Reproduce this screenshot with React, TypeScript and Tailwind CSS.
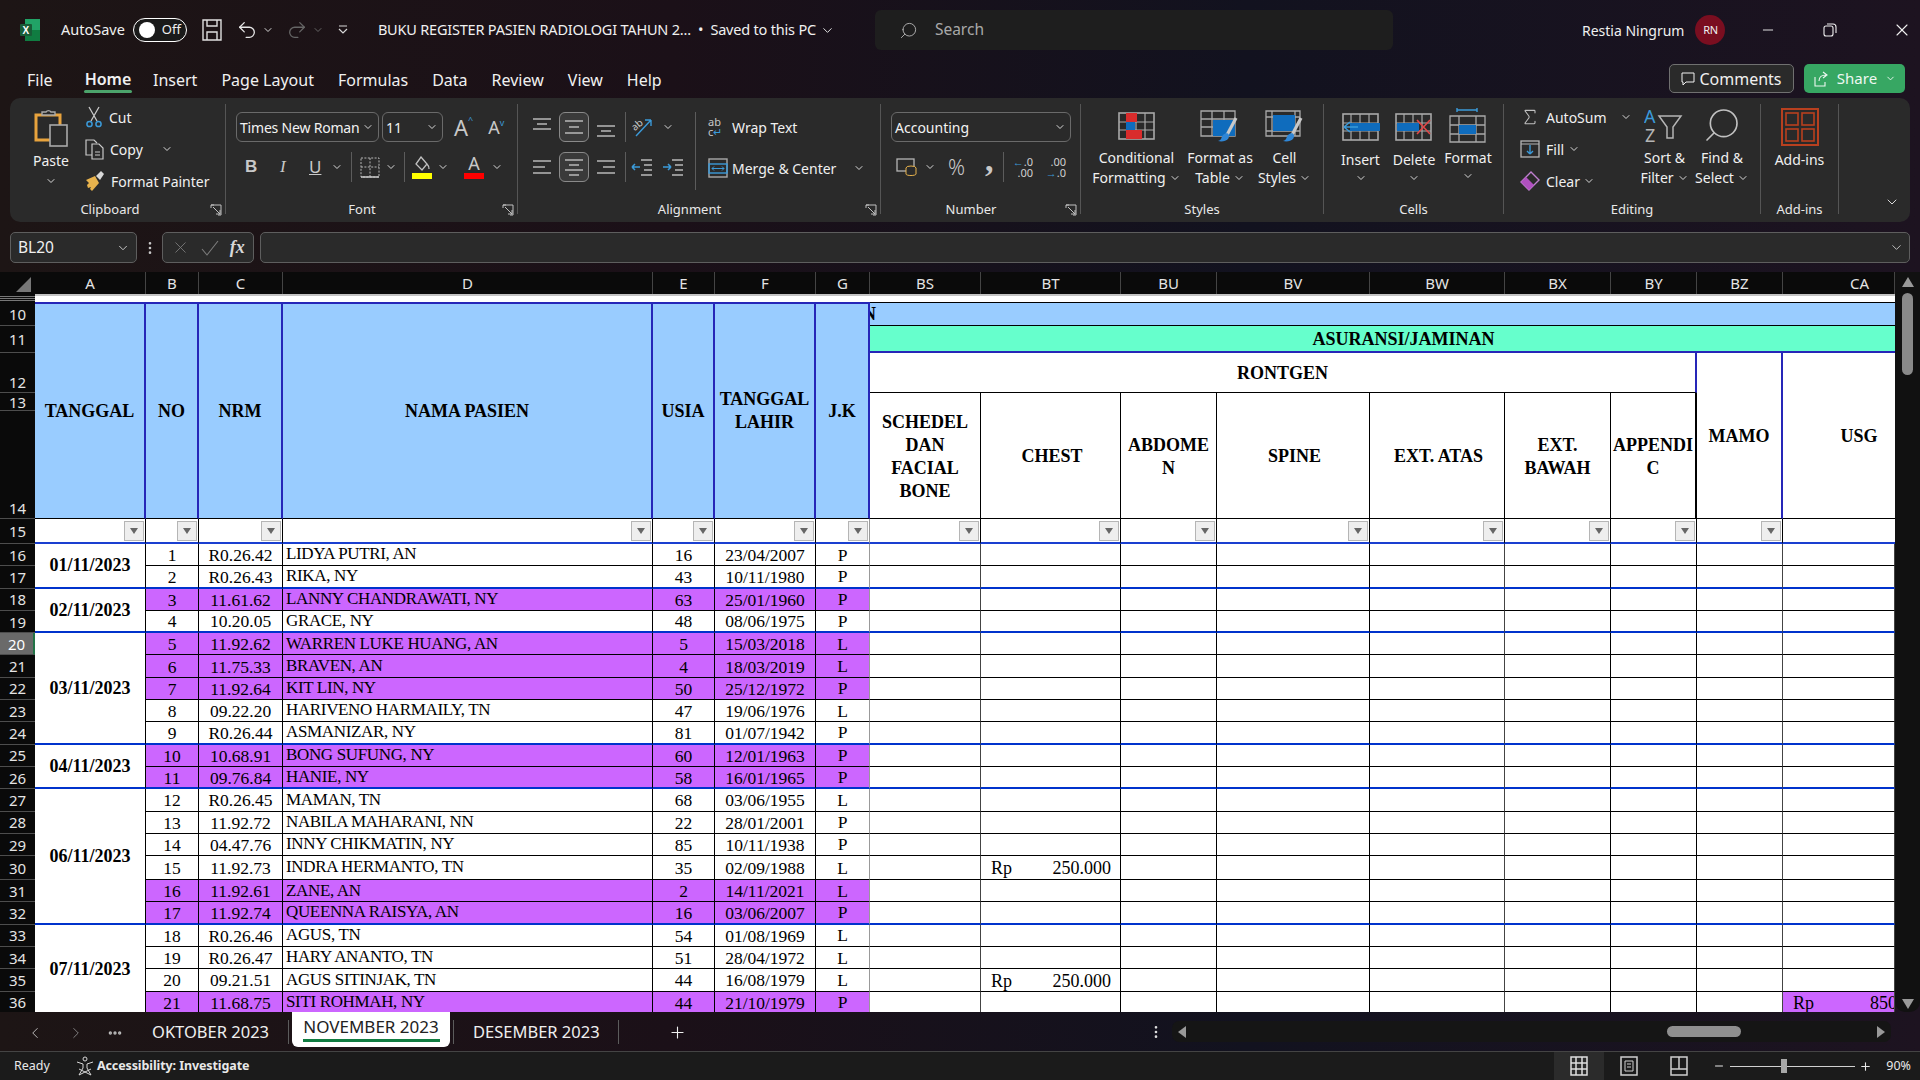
import type { ReactNode } from 'react';
import { ChevronDown, ChevronLeft, ChevronRight, Minus, MoreHorizontal, MoreVertical, Plus, Redo2, Search, Sigma, Undo2, X } from 'lucide-react';

type Row = { no: number; nrm: string; name: string; age: number; dob: string; jk: string; purple?: boolean };

const rows: Row[] = [
  { no: 1, nrm: 'R0.26.42', name: 'LIDYA PUTRI, AN', age: 16, dob: '23/04/2007', jk: 'P' },
  { no: 2, nrm: 'R0.26.43', name: 'RIKA, NY', age: 43, dob: '10/11/1980', jk: 'P' },
  { no: 3, nrm: '11.61.62', name: 'LANNY CHANDRAWATI, NY', age: 63, dob: '25/01/1960', jk: 'P', purple: true },
  { no: 4, nrm: '10.20.05', name: 'GRACE, NY', age: 48, dob: '08/06/1975', jk: 'P' },
  { no: 5, nrm: '11.92.62', name: 'WARREN LUKE HUANG, AN', age: 5, dob: '15/03/2018', jk: 'L', purple: true },
  { no: 6, nrm: '11.75.33', name: 'BRAVEN, AN', age: 4, dob: '18/03/2019', jk: 'L', purple: true },
  { no: 7, nrm: '11.92.64', name: 'KIT LIN, NY', age: 50, dob: '25/12/1972', jk: 'P', purple: true },
  { no: 8, nrm: '09.22.20', name: 'HARIVENO HARMAILY, TN', age: 47, dob: '19/06/1976', jk: 'L' },
  { no: 9, nrm: 'R0.26.44', name: 'ASMANIZAR, NY', age: 81, dob: '01/07/1942', jk: 'P' },
  { no: 10, nrm: '10.68.91', name: 'BONG SUFUNG, NY', age: 60, dob: '12/01/1963', jk: 'P', purple: true },
  { no: 11, nrm: '09.76.84', name: 'HANIE, NY', age: 58, dob: '16/01/1965', jk: 'P', purple: true },
  { no: 12, nrm: 'R0.26.45', name: 'MAMAN, TN', age: 68, dob: '03/06/1955', jk: 'L' },
  { no: 13, nrm: '11.92.72', name: 'NABILA MAHARANI, NN', age: 22, dob: '28/01/2001', jk: 'P' },
  { no: 14, nrm: '04.47.76', name: 'INNY CHIKMATIN, NY', age: 85, dob: '10/11/1938', jk: 'P' },
  { no: 15, nrm: '11.92.73', name: 'INDRA HERMANTO, TN', age: 35, dob: '02/09/1988', jk: 'L' },
  { no: 16, nrm: '11.92.61', name: 'ZANE, AN', age: 2, dob: '14/11/2021', jk: 'L', purple: true },
  { no: 17, nrm: '11.92.74', name: 'QUEENNA RAISYA, AN', age: 16, dob: '03/06/2007', jk: 'P', purple: true },
  { no: 18, nrm: 'R0.26.46', name: 'AGUS, TN', age: 54, dob: '01/08/1969', jk: 'L' },
  { no: 19, nrm: 'R0.26.47', name: 'HARY ANANTO, TN', age: 51, dob: '28/04/1972', jk: 'L' },
  { no: 20, nrm: '09.21.51', name: 'AGUS SITINJAK, TN', age: 44, dob: '16/08/1979', jk: 'L' },
  { no: 21, nrm: '11.68.75', name: 'SITI ROHMAH, NY', age: 44, dob: '21/10/1979', jk: 'P', purple: true },
];

// first row number of each merged date, and how many rows it covers
const dates: Record<number, { label: string; span: string; last: boolean }> = {
  1: { label: '01/11/2023', span: 'row-span-2', last: true },
  3: { label: '02/11/2023', span: 'row-span-2', last: true },
  5: { label: '03/11/2023', span: 'row-span-5', last: true },
  10: { label: '04/11/2023', span: 'row-span-2', last: true },
  12: { label: '06/11/2023', span: 'row-span-6', last: true },
  18: { label: '07/11/2023', span: 'row-span-4', last: false },
};
const groupEnds = [2, 4, 9, 11, 17];
const rightCols = ['border-[#444]', 'border-black', 'border-black', 'border-black', 'border-[#444]', 'border-black', 'border-black', 'border-[#444]', 'border-[#444]'];
const colNames = ['A', 'B', 'C', 'D', 'E', 'F', 'G', 'BS', 'BT', 'BU', 'BV', 'BW', 'BX', 'BY', 'BZ', 'CA'];

const Chev = ({ className = '' }: { className?: string }) => <ChevronDown size={12} strokeWidth={2} className={`shrink-0 text-[#d8d8d8] ${className}`} />;

function RowHead({ label, align = 'items-center', active }: { label: number | string; align?: string; active?: boolean }) {
  return (
    <div className={`flex justify-center font-['Noto_Sans',sans-serif] text-[15px] leading-[20px] tracking-normal border-b border-[#4d4d4d] overflow-hidden ${align} ${active ? 'bg-[#6a6a6a] text-white border-r-2 border-r-[#217346]' : 'bg-[#0a0a0a] text-[#e4e4e4]'}`}>
      {label}
    </div>
  );
}

function FilterCell({ border }: { border: string }) {
  return (
    <div className={`flex items-center justify-end bg-white border-b-2 border-b-[#1a3fd0] pr-[1px] ${border}`}>
      <div className="flex h-[20px] w-[20px] items-center justify-center border border-[#b5b5b5] bg-[#eeeeee]">
        <div className="h-0 w-0 border-x-[4px] border-t-[6px] border-x-transparent border-t-[#666]" />
      </div>
    </div>
  );
}

function Rp({ amount }: { amount: string }) {
  return (
    <div className="flex h-full items-center justify-between pl-[10px] pr-[9px] pt-[2px] text-[18px] text-black">
      <span>Rp</span>
      <span>{amount}</span>
    </div>
  );
}

function DataRow({ r, index }: { r: Row; index: number }) {
  const rowNo = index + 16;
  const end = groupEnds.includes(r.no);
  const line = end ? 'border-b-2 border-b-[#0033cc]' : 'border-b border-b-black';
  const fill = r.purple ? 'bg-[#cc66ff]' : 'bg-white';
  const center = `flex items-center justify-center border-r border-r-black pt-[1px] text-[17.5px] text-black overflow-hidden ${line} ${fill}`;
  const date = dates[r.no];
  return (
    <>
      <RowHead label={rowNo} active={rowNo === 20} />
      {date && (
        <div className={`flex items-center justify-center bg-white border-r border-r-black pt-[1px] font-bold text-black ${date.span} ${date.last ? 'border-b-2 border-b-[#0033cc]' : ''}`}>
          {date.label}
        </div>
      )}
      <div className={center}>{r.no}</div>
      <div className={center}>{r.nrm}</div>
      <div className={`flex items-center border-r border-r-black pb-[1px] pl-[3px] text-[17px] tracking-[-0.35px] whitespace-nowrap text-black overflow-hidden ${line} ${fill}`}>{r.name}</div>
      <div className={center}>{r.age}</div>
      <div className={center}>{r.dob}</div>
      <div className={`flex items-center justify-center border-r border-r-[#999] text-[17.5px] text-black ${line} ${fill}`}>{r.jk}</div>
      {rightCols.map((c, i) => (
        <div key={i} className={`border-r overflow-hidden ${c} ${line} ${i === 8 && r.purple && r.no === 21 ? 'bg-[#cc66ff]' : 'bg-white'}`}>
          {i === 1 && (r.no === 15 || r.no === 20) ? <Rp amount="250.000" /> : null}
          {i === 8 && r.no === 21 ? (
            <div className="flex h-full items-center whitespace-nowrap pl-[10px] pt-[2px] text-[18px] text-black">
              <span>Rp</span>
              <span className="ml-[56px] shrink-0">850.000</span>
            </div>
          ) : null}
        </div>
      ))}
    </>
  );
}

const leftHead = 'flex items-center justify-center bg-[#99ccff] border-t-2 border-t-[#2626b8] border-r-2 border-r-[#2626b8] border-b border-b-black text-center font-bold leading-[23px] text-black row-span-5';
const rightHead = 'flex items-center justify-center bg-white border-r border-r-black border-b border-b-black pt-[2px] text-center font-bold leading-[23px] text-black overflow-hidden whitespace-nowrap row-span-2';

function Sheet() {
  return (
    <div className="grid h-[740px] w-[1895px] shrink-0 grid-cols-[35px_111px_53px_84px_370px_62px_101px_54px_111px_140px_96px_153px_135px_106px_86px_86px_112px] grid-rows-[22px_8px_24px_27px_40px_18px_108px_25px_repeat(14,22.3px)_24px_repeat(6,22.3px)] overflow-hidden bg-white font-['Liberation_Serif',serif] text-[18px]">
      <div className="flex items-end justify-end bg-[#0a0a0a] p-[2px] pr-[4px]">
        <div className="h-0 w-0 border-b-[15px] border-l-[15px] border-b-[#777] border-l-transparent" />
      </div>
      {colNames.map((c) => (
        <div key={c} className={`flex items-center justify-center border-r border-[#444] bg-[#0a0a0a] font-['Noto_Sans',sans-serif] text-[15px] text-[#e4e4e4] ${c === 'CA' ? 'pl-[42px]' : ''}`}>{c}</div>
      ))}

      <div className="flex flex-col justify-end gap-[1px] bg-[#0a0a0a] pb-[1px]">
        <div className="h-px bg-[#777]" />
        <div className="h-px bg-[#777]" />
        <div className="h-px bg-[#777]" />
      </div>
      <div className="col-span-16 border-t-2 border-[#c4c4c4] bg-white" />

      <RowHead label={10} />
      <div className={leftHead}>TANGGAL</div>
      <div className={leftHead}>NO</div>
      <div className={leftHead}>NRM</div>
      <div className={leftHead}>NAMA PASIEN</div>
      <div className={leftHead}>USIA</div>
      <div className={leftHead}>TANGGAL<br />LAHIR</div>
      <div className={`${leftHead} border-r-[#9a9ab8]`}>J.K</div>
      <div className="col-span-9 overflow-hidden border-y border-black bg-[#99ccff] font-bold leading-[22px] text-black"><span className="-ml-[7px] block">N</span></div>

      <RowHead label={11} />
      <div className="col-span-9 flex items-center justify-center border-b-2 border-[#2626b8] bg-[#66ffcc] pl-[42px] pt-[1px] font-bold text-black">ASURANSI/JAMINAN</div>

      <RowHead label={12} align="items-end" />
      <div className="col-span-7 flex items-center justify-center border-b border-r-2 border-black border-r-[#2626b8] bg-white pt-[1px] font-bold text-black">RONTGEN</div>
      <div className="row-span-3 flex items-center justify-center border-b border-r-2 border-black border-r-[#2626b8] bg-white pt-[2px] font-bold text-black">MAMO</div>
      <div className="row-span-3 flex items-center justify-center border-b border-black bg-white pl-[40px] pt-[2px] font-bold text-black">USG</div>

      <RowHead label={13} />
      <div className={rightHead}>SCHEDEL<br />DAN<br />FACIAL<br />BONE</div>
      <div className={rightHead}><span className="pl-[3px]">CHEST</span></div>
      <div className={rightHead}>ABDOME<br />N</div>
      <div className={rightHead}><span className="pl-[3px]">SPINE</span></div>
      <div className={rightHead}><span className="pl-[3px]">EXT. ATAS</span></div>
      <div className={rightHead}>EXT.<br />BAWAH</div>
      <div className={`${rightHead} border-r-2 border-r-[#2626b8]`}>APPENDI<br />C</div>

      <RowHead label={14} align="items-end" />

      <RowHead label={15} />
      {[0, 1, 2, 3, 4, 5].map((i) => <FilterCell key={i} border="border-r border-r-black" />)}
      <FilterCell border="border-r border-r-[#999]" />
      {[0, 1, 2, 3, 4, 5, 6, 7].map((i) => <FilterCell key={i} border="border-r border-r-black" />)}
      <div className="border-b-2 border-b-[#1a3fd0] bg-white" />

      {rows.map((r, i) => <DataRow key={r.no} r={r} index={i} />)}
    </div>
  );
}

/* ---------- ribbon icons ---------- */

const G = '#a9a9a9';
const B = '#0f6cbd';

function Lines({ rows: ls, size = 24 }: { rows: [number, number, number][]; size?: number }) {
  return (
    <svg width={size} height={size} viewBox="0 0 24 24" className="shrink-0">
      {ls.map(([a, b, y], i) => <line key={i} x1={a} x2={b} y1={y} y2={y} stroke="#b9b9b9" strokeWidth="1.6" />)}
    </svg>
  );
}

function TableBase({ children, cols = 3 }: { children?: ReactNode; cols?: number }) {
  const xs = cols === 3 ? [12, 24] : [9, 18, 27];
  return (
    <svg width="38" height="30" viewBox="0 0 38 30" className="shrink-0">
      <rect x="1" y="2" width="35" height="26" fill="none" stroke={G} strokeWidth="1.6" />
      {xs.map((x) => <line key={x} x1={x} x2={x} y1="2" y2="28" stroke={G} strokeWidth="1.2" />)}
      <line x1="1" x2="36" y1="11" y2="11" stroke={G} strokeWidth="1.2" />
      <line x1="1" x2="36" y1="19" y2="19" stroke={G} strokeWidth="1.2" />
      {children}
    </svg>
  );
}

const Brush = () => (
  <>
    <path d="M36 9 L27 26" stroke="#c8c8c8" strokeWidth="3.2" />
    <path d="M23 26 C27 22 31 25 28 30 C26 32 22 33 18 32 C22 31 21 28 23 26Z" fill="#2f86d6" />
  </>
);

function ToolBtn({ children, active }: { children: ReactNode; active?: boolean }) {
  return (
    <div className={`flex h-[30px] w-[30px] items-center justify-center rounded-[6px] ${active ? 'border border-[#8a8a8a] bg-[#3a3a3a]' : ''}`}>
      {children}
    </div>
  );
}

const VSep = ({ h = 'h-[30px]', className = '' }: { h?: string; className?: string }) => <div className={`w-px bg-[#5c5c5c] ${h} ${className}`} />;

function Group({ width, label, launcher, children, labelClass = '' }: { width: string; label: string; launcher?: boolean; children: ReactNode; labelClass?: string }) {
  return (
    <div className="flex">
      <div className={`flex h-[120px] flex-col ${width}`}>
        <div className="min-h-0 flex-1">{children}</div>
        <div className={`flex h-[20px] items-center justify-center pb-[2px] text-[13px] text-[#e8e8e8] ${labelClass}`}>
          <span className="flex-1 text-center">{label}</span>
          {launcher && (
            <svg width="12" height="12" viewBox="0 0 12 12" className="ml-[4px] mr-[3px] shrink-0">
              <path d="M1 1h10v10M1 1v3M1 1h3M11 11H8M3 3l7 7M10 6v4H6" fill="none" stroke="#c0c0c0" strokeWidth="1" />
            </svg>
          )}
        </div>
      </div>
      <div className="mt-[3px] h-[110px] w-px bg-[#555]" />
    </div>
  );
}

function BigBtn({ icon, lines, width, iconH = 'h-[44px]', chevOwnLine, noChev }: { icon: ReactNode; lines: string[]; width: string; iconH?: string; chevOwnLine?: boolean; noChev?: boolean }) {
  return (
    <div className={`flex flex-col items-center ${width}`}>
      <div className={`flex items-center justify-center ${iconH}`}>{icon}</div>
      <div className="text-center text-[14px] leading-[20px] whitespace-nowrap text-[#f0f0f0]">
        {lines.map((l, i) => <div key={i} className="flex items-center justify-center gap-[3px]">{l}{!chevOwnLine && !noChev && i === lines.length - 1 && <Chev />}</div>)}
        {chevOwnLine && <div className="flex justify-center pt-[2px]"><Chev /></div>}
      </div>
    </div>
  );
}

function Ribbon() {
  const small = 'flex h-[32px] items-center gap-[6px] text-[14px] text-[#f0f0f0] whitespace-nowrap';
  const combo = 'flex h-[30px] items-center justify-between rounded-[6px] border border-[#6a6a6a] pl-[3px] pr-[4px] text-[14px] text-[#f2f2f2]';
  return (
    <div className="mx-[10px] flex h-[124px] overflow-hidden rounded-[10px] bg-[#2a2a2a] pt-[3px]">
      {/* Clipboard */}
      <Group width="w-[215px]" label="Clipboard" launcher labelClass="pl-[4px]">
        <div className="flex">
          <div className="flex w-[75px] flex-col items-center pl-[7px] pt-[8px]">
            <svg width="36" height="38" viewBox="0 0 36 38">
              <path d="M3 6h24v25H3z" fill="none" stroke="#e8a33d" strokeWidth="3" />
              <path d="M9 6V3h4a3 3 0 0 1 5 0h4v3z" fill="#2a2a2a" stroke="#a9a9a9" strokeWidth="1.4" />
              <rect x="17" y="16" width="17" height="21" fill="#2a2a2a" stroke="#a9a9a9" strokeWidth="1.6" />
            </svg>
            <span className="mt-[4px] text-[14px] leading-[20px] text-[#f0f0f0]">Paste</span>
            <Chev className="mt-[4px]" />
          </div>
          <div className="flex flex-col">
            <div className={small}>
              <svg width="18" height="22" viewBox="0 0 18 22" className="shrink-0"><path d="M4 1l8 14M14 1L6 15" stroke="#c8c8c8" strokeWidth="1.3" fill="none" /><circle cx="4.5" cy="18" r="2.6" stroke="#3b9ad9" strokeWidth="1.5" fill="none" /><circle cx="13.5" cy="18" r="2.6" stroke="#3b9ad9" strokeWidth="1.5" fill="none" /></svg>
              Cut
            </div>
            <div className={small}>
              <svg width="20" height="22" viewBox="0 0 20 22" className="shrink-0"><path d="M7 17H1V2h8l3 3" fill="none" stroke="#c8c8c8" strokeWidth="1.2" /><path d="M7 6h7l4 4v11H7z" fill="#2a2a2a" stroke="#c8c8c8" strokeWidth="1.2" /><path d="M10 14h5M10 17h5" stroke="#c8c8c8" /></svg>
              <span className="ml-[-1px]">Copy</span>
              <Chev className="ml-[12px]" />
            </div>
            <div className={`${small} gap-[2px]`}>
              <svg width="20" height="22" viewBox="0 0 20 22" className="shrink-0"><path d="M1 10l9-4 4 7-7 8-2-2 1-2-3 1-1-3 2-2z" fill="#e8b34d" /><path d="M11 6l5-5 3 3-4 6z" fill="#d8d8d8" /></svg>
              Format Painter
            </div>
          </div>
        </div>
      </Group>

      {/* Font */}
      <Group width="w-[291px]" label="Font" launcher>
        <div className="flex flex-col gap-[10px] pl-[10px] pt-[11px]">
          <div className="flex items-center gap-[3px]">
            <div className={`${combo} w-[143px] tracking-[-0.2px]`}>Times New Roman<Chev /></div>
            <div className={`${combo} w-[61px]`}>11<Chev /></div>
            <div className="ml-[8px] flex items-start text-[22px] leading-none text-[#c8c8c8]">A<span className="-mt-[1px] text-[9px] text-[#3b9ad9]">^</span></div>
            <div className="ml-[12px] flex items-start text-[18px] leading-none text-[#c8c8c8]">A<span className="text-[9px] text-[#3b9ad9]">v</span></div>
          </div>
          <div className="flex h-[30px] items-center pl-[9px] text-[17px] text-[#c8c8c8]">
            <span className="w-[35px] font-['Liberation_Sans',sans-serif] font-bold">B</span>
            <span className="w-[29px] font-['Liberation_Serif',serif] italic">I</span>
            <span className="w-[22px] underline">U</span>
            <Chev />
            <VSep className="mx-[8px]" />
            <svg width="20" height="24" viewBox="0 0 20 24" className="shrink-0"><path d="M1 3h18v19H1zM10 3v19M1 12h18" fill="none" stroke="#b5b5b5" strokeDasharray="2 1.4" /><path d="M1 22h18" stroke="#c8c8c8" strokeWidth="1.5" /></svg>
            <Chev className="ml-[5px]" />
            <VSep className="ml-[7px] mr-[6px]" />
            <div className="flex w-[22px] flex-col items-center">
              <svg width="18" height="16" viewBox="0 0 18 16"><path d="M8 1l6 7-5 6-6-6zM14 8c2 2 2 4 2 5" fill="none" stroke="#c0c0c0" strokeWidth="1.3" /></svg>
              <div className="mt-[1px] h-[6px] w-[20px] bg-[#ffff00]" />
            </div>
            <Chev className="ml-[4px]" />
            <div className="ml-[14px] flex w-[22px] flex-col items-center leading-none">
              <span className="text-[18px] leading-[17px]">A</span>
              <div className="mt-[1px] h-[6px] w-[20px] bg-[#ff0000]" />
            </div>
            <Chev className="ml-[6px]" />
          </div>
        </div>
      </Group>

      {/* Alignment */}
      <Group width="w-[362px]" label="Alignment" launcher>
        <div className="flex pl-[9px] pt-[11px]">
          <div className="flex flex-col gap-[10px]">
            <div className="flex items-center gap-[2px]">
              <ToolBtn><Lines rows={[[3, 21, 4], [7, 17, 9], [3, 21, 14]]} /></ToolBtn>
              <ToolBtn active><Lines rows={[[3, 21, 6], [7, 17, 12], [3, 21, 18]]} /></ToolBtn>
              <ToolBtn><Lines rows={[[3, 21, 11], [7, 17, 16], [3, 21, 21]]} /></ToolBtn>
              <VSep className="mx-[2px]" />
              <svg width="24" height="24" viewBox="0 0 24 24" className="shrink-0"><text x="1" y="14" fontSize="10" fill="#c8c8c8" transform="rotate(-40 6 10)">ab</text><path d="M6 21L21 5M21 5h-6M21 5v6" stroke="#3b9ad9" strokeWidth="1.4" fill="none" /></svg>
              <Chev className="ml-[6px]" />
            </div>
            <div className="flex items-center gap-[2px]">
              <ToolBtn><Lines rows={[[3, 21, 6], [3, 15, 12], [3, 21, 18]]} /></ToolBtn>
              <ToolBtn active><Lines rows={[[3, 21, 5], [7, 17, 10], [3, 21, 15], [7, 17, 20]]} /></ToolBtn>
              <ToolBtn><Lines rows={[[3, 21, 6], [9, 21, 12], [3, 21, 18]]} /></ToolBtn>
              <VSep className="mx-[2px]" />
              <svg width="24" height="24" viewBox="0 0 24 24" className="shrink-0"><path d="M11 5h11M14 10h8M14 15h8M11 20h11" stroke="#b9b9b9" strokeWidth="1.5" /><path d="M10 12H2M2 12l3-3M2 12l3 3" stroke="#3b9ad9" strokeWidth="1.5" fill="none" /></svg>
              <svg width="24" height="24" viewBox="0 0 24 24" className="ml-[5px] shrink-0"><path d="M11 5h11M14 10h8M14 15h8M11 20h11" stroke="#b9b9b9" strokeWidth="1.5" /><path d="M2 12h8M10 12l-3-3M10 12l-3 3" stroke="#3b9ad9" strokeWidth="1.5" fill="none" /></svg>
            </div>
          </div>
          <VSep h="h-[78px]" className="ml-[10px]" />
          <div className="flex flex-col gap-[11px] pl-[12px]">
            <div className="flex h-[30px] items-center text-[14px] whitespace-nowrap text-[#f0f0f0]">
              <div className="w-[24px] text-[11px] leading-[10px] text-[#c8c8c8]">ab<br />c<span className="text-[#3b9ad9]">↵</span></div>
              Wrap Text
            </div>
            <div className="flex h-[30px] items-center text-[14px] whitespace-nowrap text-[#f0f0f0]">
              <svg width="20" height="20" viewBox="0 0 20 20" className="shrink-0"><rect x="1" y="1" width="18" height="18" fill="none" stroke="#a9a9a9" strokeWidth="1.4" /><rect x="1" y="6" width="18" height="9" fill="none" stroke="#3b9ad9" strokeWidth="1.4" /><path d="M4 10.5h12M4 10.5l2-2M4 10.5l2 2M16 10.5l-2-2M16 10.5l-2 2" stroke="#3b9ad9" fill="none" /></svg>
              <span className="ml-[4px]">Merge &amp; Center</span>
              <Chev className="ml-[17px]" />
            </div>
          </div>
        </div>
      </Group>

      {/* Number */}
      <Group width="w-[199px]" label="Number" launcher>
        <div className="flex flex-col gap-[10px] pl-[10px] pt-[11px]">
          <div className={`${combo} w-[180px]`}>Accounting<Chev /></div>
          <div className="flex h-[30px] items-center pl-[5px]">
            <svg width="22" height="20" viewBox="0 0 22 20" className="shrink-0"><rect x="1" y="2" width="17" height="12" fill="none" stroke="#b5b5b5" strokeWidth="1.3" /><ellipse cx="15" cy="11" rx="5" ry="2" fill="#2a2a2a" stroke="#e8b34d" /><path d="M10 11v6c0 2 10 2 10 0v-6" fill="#2a2a2a" stroke="#e8b34d" /></svg>
            <Chev className="ml-[6px]" />
            <span className="ml-[12px] text-[21px] font-light leading-none text-[#c8c8c8]">%</span>
            <span className="ml-[20px] -mt-[14px] w-[9px] font-['Liberation_Serif',serif] text-[34px] font-bold leading-[14px] text-[#c8c8c8]">,</span>
            <VSep className="ml-[9px]" />
            <div className="ml-[3px] w-[26px] text-right text-[11px] leading-[11px] text-[#d0d0d0]"><span className="text-[#3b9ad9]">←</span>.0<br />.00</div>
            <div className="ml-[7px] w-[26px] text-right text-[11px] leading-[11px] text-[#d0d0d0]">.00<br /><span className="text-[#3b9ad9]">→</span>.0</div>
          </div>
        </div>
      </Group>

      {/* Styles */}
      <Group width="w-[242px]" label="Styles">
        <div className="flex pl-[6px] pt-[3px]">
          <BigBtn width="w-[99px]" lines={['Conditional', 'Formatting']} icon={
            <TableBase cols={4}>
              <rect x="8" y="2" width="11" height="9" fill="#d92c2c" /><rect x="8" y="11" width="9" height="8" fill={B} /><rect x="8" y="19" width="16" height="9" fill="#d92c2c" />
            </TableBase>
          } />
          <BigBtn width="w-[68px]" lines={['Format as', 'Table']} icon={
            <svg width="40" height="34" viewBox="0 0 40 34" className="shrink-0">
              <path d="M1 2h34v25H1zM12 2v25M24 2v25M1 10h34M1 18h34" fill="none" stroke={G} strokeWidth="1.3" /><rect x="13" y="11" width="22" height="16" fill={B} /><Brush />
            </svg>
          } />
          <BigBtn width="w-[61px]" lines={['Cell', 'Styles']} icon={
            <svg width="40" height="34" viewBox="0 0 40 34" className="shrink-0">
              <path d="M1 2h34v25H1zM7 2v25M30 2v25M1 8h34M1 22h34" fill="none" stroke={G} strokeWidth="1.3" /><rect x="8" y="6" width="22" height="16" fill={B} /><Brush />
            </svg>
          } />
        </div>
      </Group>

      {/* Cells */}
      <Group width="w-[179px]" label="Cells">
        <div className="flex pl-[10px] pt-[3px]">
          <BigBtn width="w-[53px]" chevOwnLine lines={['Insert']} iconH="h-[46px]" icon={
            <TableBase cols={4}><rect x="8" y="11" width="30" height="8" fill={B} /><path d="M16 15H2M2 15l6-5M2 15l6 5" stroke="#3b9ad9" strokeWidth="1.6" fill="none" /></TableBase>
          } />
          <BigBtn width="w-[54px]" chevOwnLine lines={['Delete']} iconH="h-[46px]" icon={
            <TableBase cols={4}><rect x="2" y="11" width="22" height="8" fill={B} /><path d="M22 8l13 14M35 8L22 22" stroke="#e04848" strokeWidth="1.6" /></TableBase>
          } />
          <BigBtn width="w-[54px]" chevOwnLine lines={['Format']} icon={
            <svg width="38" height="36" viewBox="0 0 38 36" className="shrink-0">
              <path d="M8 2h20M8 0v4M28 0v4" stroke="#3b9ad9" strokeWidth="1.4" />
              <path d="M1 8h35v26H1zM10 8v26M27 8v26M1 17h35M1 26h35" fill="none" stroke={G} strokeWidth="1.3" /><rect x="10" y="17" width="17" height="9" fill={B} />
            </svg>
          } />
        </div>
      </Group>

      {/* Editing */}
      <Group width="w-[256px]" label="Editing">
        <div className="flex">
          <div className="flex w-[132px] flex-col pl-[16px]">
            <div className={small}><Sigma size={20} strokeWidth={1.3} className="text-[#c0c0c0]" />AutoSum<Chev className="ml-[7px]" /></div>
            <div className={small}>
              <svg width="20" height="20" viewBox="0 0 20 20" className="shrink-0"><rect x="1" y="2" width="18" height="16" fill="none" stroke="#b5b5b5" strokeWidth="1.3" /><path d="M1 5h18" stroke="#b5b5b5" /><path d="M10 6v9M10 15l-3-3M10 15l3-3" stroke="#3b9ad9" strokeWidth="1.4" fill="none" /></svg>
              Fill<Chev className="-ml-[2px]" />
            </div>
            <div className={small}>
              <svg width="20" height="20" viewBox="0 0 20 20" className="shrink-0"><path d="M1 11L11 1l8 8-10 10z" fill="none" stroke="#c080d0" strokeWidth="1.4" /><path d="M1 11l5-5 8 8-5 5z" fill="#b050c0" /></svg>
              Clear<Chev className="-ml-[3px]" />
            </div>
          </div>
          <BigBtn width="w-[57px]" lines={['Sort &', 'Filter']} iconH="h-[47px]" icon={
            <svg width="42" height="38" viewBox="0 0 42 38" className="shrink-0">
              <text x="0" y="17" fontSize="18" fill="#3b9ad9" fontFamily="Noto Sans">A</text>
              <text x="1" y="36" fontSize="18" fill="#b5b5b5" fontFamily="Noto Sans">Z</text>
              <path d="M15 10h22l-8 11v11h-6V21z" fill="none" stroke="#b5b5b5" strokeWidth="1.5" />
            </svg>
          } />
          <BigBtn width="w-[58px]" lines={['Find &', 'Select']} iconH="h-[47px]" icon={<Search size={40} strokeWidth={1} className="-scale-x-100 text-[#c0c0c0]" />} />
        </div>
      </Group>

      {/* Add-ins */}
      <Group width="w-[77px]" label="Add-ins">
        <div className="pt-[3px]">
          <BigBtn width="w-[77px]" noChev lines={['Add-ins']} iconH="h-[46px]" icon={
            <svg width="38" height="38" viewBox="0 0 38 38"><rect x="1" y="1" width="36" height="36" fill="none" stroke="#b8401f" strokeWidth="2" /><rect x="5" y="5" width="12" height="12" fill="none" stroke="#b8401f" strokeWidth="1.6" /><rect x="21" y="5" width="12" height="12" fill="none" stroke="#b8401f" strokeWidth="1.6" /><rect x="5" y="21" width="12" height="12" fill="none" stroke="#b8401f" strokeWidth="1.6" /><rect x="21" y="21" width="12" height="12" fill="none" stroke="#b8401f" strokeWidth="1.6" /></svg>
          } />
        </div>
      </Group>

      <div className="flex flex-1 items-end justify-end pb-[12px] pr-[10px]"><ChevronDown size={16} strokeWidth={1.5} className="text-[#d8d8d8]" /></div>
    </div>
  );
}

function TitleBar() {
  return (
    <div className="flex h-[58px] items-center pt-[2px] text-[14px] text-[#f0f0f0]">
      <svg width="22" height="24" viewBox="0 0 22 24" className="ml-[19px] shrink-0">
        <path d="M6 1h15v22H6z" fill="#21a366" /><path d="M6 12h15v11H6z" fill="#107c41" />
        <rect x="1" y="6" width="12" height="12" rx="1" fill="#185c37" />
        <text x="3.5" y="16" fontSize="10" fontWeight="700" fill="#fff" fontFamily="Liberation Sans">X</text>
      </svg>
      <span className="ml-[20px] text-[14.5px]">AutoSave</span>
      <div className="ml-[8px] flex h-[24px] w-[54px] items-center justify-between rounded-full border border-white bg-[#1a1a1a] pl-[5px] pr-[5px]">
        <div className="h-[16px] w-[16px] rounded-full bg-white" />
        <span className="text-[13px]">Off</span>
      </div>
      <svg width="20" height="22" viewBox="0 0 20 22" className="ml-[15px] shrink-0"><path d="M1 1h18v20H1zM5 1v6h10V1M5 21v-8h10v8" fill="none" stroke="#e0e0e0" strokeWidth="1.4" /></svg>
      <Undo2 size={22} strokeWidth={1.4} className="ml-[14px] text-[#e8e8e8]" />
      <Chev className="ml-[4px]" />
      <Redo2 size={22} strokeWidth={1.4} className="ml-[12px] text-[#666]" />
      <ChevronDown size={12} className="ml-[4px] text-[#666]" />
      <svg width="12" height="12" viewBox="0 0 12 12" className="ml-[13px] shrink-0"><path d="M2 2h8M2 5l4 4 4-4" fill="none" stroke="#d8d8d8" strokeWidth="1.2" /></svg>
      <span className="ml-[29px] whitespace-nowrap text-[14.5px] tracking-[-0.2px]">BUKU REGISTER PASIEN RADIOLOGI TAHUN 2... &nbsp;•&nbsp; Saved to this PC</span>
      <ChevronDown size={15} strokeWidth={1.6} className="ml-[4px] text-[#e0e0e0]" />
      <div className="ml-[40px] flex h-[40px] w-[518px] items-center rounded-[6px] bg-[#1e1e1e] pl-[24px]">
        <Search size={19} strokeWidth={1.2} className="-scale-x-100 text-[#b0b0b0]" />
        <span className="ml-[17px] text-[15.5px] text-[#a8a8a8]">Search</span>
      </div>
      <span className="ml-[189px] whitespace-nowrap text-[14px]">Restia Ningrum</span>
      <div className="ml-[11px] flex h-[30px] w-[30px] items-center justify-center rounded-full bg-[#7a0e20] text-[11px] tracking-[-0.3px]">RN</div>
      <Minus size={16} strokeWidth={1.4} className="ml-[35px]" />
      <svg width="14" height="14" viewBox="0 0 14 14" className="ml-[47px] shrink-0"><rect x="1" y="3" width="9" height="10" rx="2" fill="none" stroke="#f0f0f0" strokeWidth="1.1" /><path d="M4 1h6a3 3 0 0 1 3 3v6" fill="none" stroke="#f0f0f0" strokeWidth="1.1" /></svg>
      <X size={20} strokeWidth={1.3} className="ml-[55px]" />
    </div>
  );
}

function MenuBar() {
  const tabs = ['Insert', 'Page Layout', 'Formulas', 'Data', 'Review', 'View', 'Help'];
  return (
    <div className="flex h-[40px] items-start text-[16px] text-[#f0f0f0]">
      <span className="ml-[27px] mt-[10px] w-[57px]">File</span>
      <div className="mt-[10px] flex h-[25px] w-[48px] flex-col items-center justify-between">
        <span className="font-semibold leading-[22px]">Home</span>
        <div className="h-[3px] w-[48px] shrink-0 rounded-full bg-[#4ca36b]" />
      </div>
      <div className="ml-[21px] mt-[10px] flex gap-[24px] whitespace-nowrap">
        {tabs.map((t) => <span key={t}>{t}</span>)}
      </div>
      <div className="ml-auto mr-[15px] mt-[6px] flex gap-[10px]">
        <div className="flex h-[29px] w-[125px] items-center justify-center gap-[4px] rounded-[5px] border border-[#707070] bg-[#2a2a2a] text-[16px]">
          <svg width="14" height="14" viewBox="0 0 14 14"><path d="M1 1h12v9H5l-3 3v-3H1z" fill="none" stroke="#f0f0f0" strokeWidth="1" /></svg>
          Comments
        </div>
        <div className="flex h-[29px] w-[101px] items-center justify-between rounded-[5px] bg-[#37a763] px-[9px] text-[15px] text-[#eef8f2]">
          <svg width="16" height="16" viewBox="0 0 16 16"><path d="M2 6v9h10v-4M6 10c0-4 3-6 7-6M10 1l4 3-4 3" fill="none" stroke="#eef8f2" strokeWidth="1.1" /></svg>
          Share
          <ChevronDown size={11} strokeWidth={2} />
        </div>
      </div>
    </div>
  );
}

function FormulaBar() {
  const box = 'h-[31px] rounded-[5px] border border-[#5e5e5e] bg-[#2a2a2a]';
  return (
    <div className="mx-[10px] mt-[10px] flex items-center text-[#f0f0f0]">
      <div className={`${box} flex w-[127px] items-center justify-between pl-[7px] pr-[6px] text-[15.5px]`}>
        BL20
        <ChevronDown size={14} strokeWidth={1.6} className="text-[#d0d0d0]" />
      </div>
      <MoreVertical size={16} className="ml-[5px] text-[#c8c8c8]" />
      <div className={`${box} ml-[4px] flex w-[92px] items-center justify-around px-[3px] text-[#7d7d7d]`}>
        <X size={19} strokeWidth={1.1} />
        <svg width="18" height="16" viewBox="0 0 18 16"><path d="M1 9l5 6L17 1" fill="none" stroke="#7d7d7d" strokeWidth="1.1" /></svg>
        <span className="font-['Liberation_Serif',serif] text-[18px] font-bold italic text-[#d8d8d8]">fx</span>
      </div>
      <div className={`${box} ml-[6px] flex flex-1 items-center justify-end pr-[5px]`}>
        <ChevronDown size={15} strokeWidth={1.4} className="text-[#d0d0d0]" />
      </div>
    </div>
  );
}

function VScroll() {
  return (
    <div className="flex w-[25px] flex-col items-center rounded-b-[10px] bg-[#111] pt-[5px] pb-[3px]">
      <div className="h-0 w-0 border-x-[6px] border-b-[10px] border-x-transparent border-b-[#999]" />
      <div className="mt-[6px] h-[82px] w-[11px] rounded-full bg-[#8a8a8a]" />
      <div className="mt-auto h-0 w-0 border-x-[6px] border-t-[10px] border-x-transparent border-t-[#999]" />
    </div>
  );
}

function SheetTabs() {
  return (
    <div className="flex h-[40px] border-b border-[#444] text-[16.5px] text-[#efefef]">
      <ChevronLeft size={18} strokeWidth={1.2} className="ml-[26px] mt-[12px] text-[#c8c8c8]" />
      <ChevronRight size={18} strokeWidth={1.2} className="ml-[23px] mt-[12px] text-[#8a8a8a]" />
      <MoreHorizontal size={16} strokeWidth={3} className="ml-[22px] mt-[13px] text-[#bbb]" />
      <span className="ml-[29px] mt-[8px] w-[136px] whitespace-nowrap">OKTOBER 2023</span>
      <VSep h="h-[24px]" className="mt-[8px]" />
      <div className="ml-[3px] flex h-[35px] w-[158px] flex-col items-center rounded-b-[6px] bg-white pt-[4px] text-[17px] text-[#222]">
        <span className="whitespace-nowrap leading-[22px]">NOVEMBER 2023</span>
        <div className="mt-[1px] h-[3px] w-[137px] bg-[#107c41]" />
      </div>
      <VSep h="h-[24px]" className="ml-[3px] mt-[8px]" />
      <span className="ml-[19px] mt-[8px] w-[145px] whitespace-nowrap">DESEMBER 2023</span>
      <VSep h="h-[24px]" className="mt-[8px]" />
      <Plus size={19} strokeWidth={1.4} className="ml-[49px] mt-[11px]" />
      <MoreVertical size={16} className="ml-[461px] mt-[12px] text-[#ddd]" />
      <div className="ml-[8px] mt-[9px] flex h-[21px] w-[719px] items-center rounded-[7px] bg-[#151515] px-[6px]">
        <div className="h-0 w-0 border-y-[6px] border-r-[8px] border-y-transparent border-r-[#999]" />
        <div className="ml-[481px] h-[11px] w-[74px] rounded-full bg-[#8f8f8f]" />
        <div className="ml-auto h-0 w-0 border-y-[6px] border-l-[8px] border-y-transparent border-l-[#999]" />
      </div>
    </div>
  );
}

function StatusBar() {
  return (
    <div className="flex h-[28px] items-center bg-[#1b1b1b] text-[12.5px] text-[#e8e8e8]">
      <span className="ml-[14px]">Ready</span>
      <svg width="18" height="20" viewBox="0 0 18 20" className="ml-[26px] shrink-0"><circle cx="9" cy="3" r="2" fill="none" stroke="#d8d8d8" /><path d="M1 6l6 2v4l-4 7M17 6l-6 2v4l4 7M3 13l12 6M15 13L3 19" fill="none" stroke="#d8d8d8" /></svg>
      <span className="ml-[3px] font-bold tracking-[-0.1px]">Accessibility: Investigate</span>
      <div className="ml-auto flex h-full w-[50px] items-center justify-center bg-[#2b2b2b]">
        <svg width="18" height="20" viewBox="0 0 18 20"><path d="M1 1h16v18H1zM6 1v18M12 1v18M1 7h16M1 13h16" fill="none" stroke="#e0e0e0" strokeWidth="1.5" /></svg>
      </div>
      <svg width="18" height="20" viewBox="0 0 18 20" className="ml-[16px] shrink-0"><path d="M1 1h16v18H1z" fill="none" stroke="#d0d0d0" strokeWidth="1.5" /><path d="M5 5h8v10H5zM7 8h4M7 11h4" fill="none" stroke="#d0d0d0" /></svg>
      <svg width="18" height="20" viewBox="0 0 18 20" className="ml-[32px] shrink-0"><path d="M1 1h16v18H1zM1 13h16M9 1v12" fill="none" stroke="#d0d0d0" strokeWidth="1.5" /></svg>
      <Minus size={12} className="ml-[25px]" />
      <div className="ml-[5px] flex w-[125px] items-center">
        <div className="h-px w-[51px] bg-[#d0d0d0]" />
        <div className="h-[14px] w-[6px] bg-[#a8a8a8]" />
        <div className="h-px flex-1 bg-[#d0d0d0]" />
      </div>
      <Plus size={13} className="ml-[4px]" />
      <span className="ml-[14px] mr-[9px]">90%</span>
    </div>
  );
}

export default function App() {
  return (
    <div className="flex h-[1080px] w-[1920px] flex-col overflow-hidden bg-[linear-gradient(90deg,#1d1515_0%,#1b1018_35%,#12121f_65%,#1d1320_100%)] font-['Noto_Sans',sans-serif]">
      <TitleBar />
      <MenuBar />
      <Ribbon />
      <FormulaBar />
      <div className="mt-[9px] flex h-[740px]">
        <Sheet />
        <VScroll />
      </div>
      <SheetTabs />
      <StatusBar />
    </div>
  );
}
